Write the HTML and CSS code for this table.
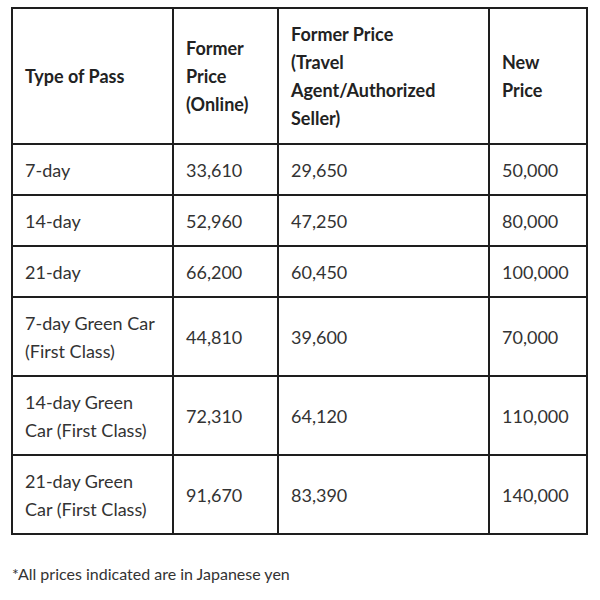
FILE: index.html
```html
<!DOCTYPE html>
<html>
<head>
<meta charset="utf-8">
<link rel="stylesheet" href="styles.css">
</head>
<body>
<div class="wrap">
<table class="prices">
<colgroup>
<col class="c1"><col class="c2"><col class="c3"><col class="c4">
</colgroup>
<thead>
<tr>
<th>Type of Pass</th>
<th>Former Price (Online)</th>
<th class="wide">Former Price (Travel Agent/Authorized Seller)</th>
<th>New Price</th>
</tr>
</thead>
<tbody>
<tr><td>7-day</td><td>33,610</td><td>29,650</td><td>50,000</td></tr>
<tr><td>14-day</td><td>52,960</td><td>47,250</td><td>80,000</td></tr>
<tr><td>21-day</td><td>66,200</td><td>60,450</td><td>100,000</td></tr>
<tr><td>7-day Green Car (First Class)</td><td>44,810</td><td>39,600</td><td>70,000</td></tr>
<tr><td>14-day Green Car (First Class)</td><td>72,310</td><td>64,120</td><td>110,000</td></tr>
<tr><td>21-day Green Car (First Class)</td><td>91,670</td><td>83,390</td><td>140,000</td></tr>
</tbody>
</table>
<p class="note">*All prices indicated are in Japanese yen</p>
</div>
</body>
</html>
```
FILE: styles.css
```css
html, body {
  margin: 0;
  padding: 0;
  background: #fff;
}
.wrap {
  padding: 7px 0 0 11px;
  font-family: Lato, "Liberation Sans", sans-serif;
  color: #333;
}
.prices {
  border-collapse: collapse;
  width: 575px;
  table-layout: fixed;
  font-size: 18px;
  line-height: 28px;
}
.c1 { width: 161px; }
.c2 { width: 105px; }
.c3 { width: 211px; }
.c4 { width: 98px; }
.prices th, .prices td {
  border: 2px solid #1e1e1e;
  padding: 11px 12px 11px 12px;
  text-align: left;
  vertical-align: middle;
}
.prices td {
  white-space: nowrap;
  padding-top: 10.5px;
  padding-bottom: 10.5px;
}
.prices td:first-child {
  white-space: normal;
  padding-right: 10px;
}
.prices th {
  font-weight: 700;
  color: #222;
}
.prices th.wide {
  padding-right: 40px;
}
.note {
  margin: 29px 0 0 1px;
  font-size: 16px;
  line-height: 20px;
  color: #333;
}
```
